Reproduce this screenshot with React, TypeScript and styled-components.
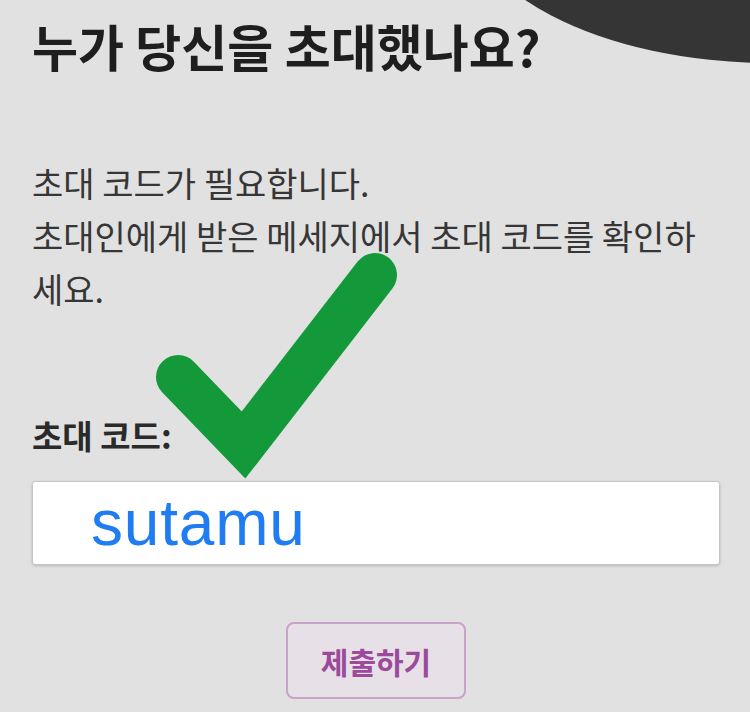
import React from "react";
import styled, { createGlobalStyle } from "styled-components";

const GlobalStyle = createGlobalStyle`
  html, body {
    margin: 0;
    padding: 0;
    background: #e1e1e1;
  }
  * { box-sizing: border-box; }
`;

const Page = styled.div`
  position: relative;
  width: 750px;
  height: 712px;
  overflow: hidden;
  background: #e1e1e1;
  padding: 15px 30px 0 32px;
  display: flex;
  flex-direction: column;
  font-family: "Noto Sans CJK KR", "Noto Sans", sans-serif;
`;

const Blob = styled.div`
  position: absolute;
  left: 460px;
  top: -263px;
  width: 620px;
  height: 326px;
  border-radius: 50%;
  background: #353535;
`;

const Title = styled.h1`
  margin: 0;
  font-size: 50px;
  line-height: 60px;
  font-weight: 700;
  letter-spacing: 0;
  color: #1e1e1e;
`;

const Description = styled.p`
  margin: 81px 0 0;
  font-size: 34px;
  line-height: 53px;
  font-weight: 400;
  letter-spacing: 0;
  color: #363636;
`;

const Label = styled.label`
  margin-top: 100px;
  font-size: 33px;
  line-height: 40px;
  font-weight: 700;
  letter-spacing: 0;
  color: #2a2a2a;
`;

const CodeBox = styled.div`
  margin-top: 26px;
  height: 84px;
  background: #ffffff;
  border: 1px solid #c6c6c6;
  border-radius: 3px;
  box-shadow: 0 1px 3px rgba(0, 0, 0, 0.18);
  display: flex;
  align-items: center;
  padding-left: 58px;
`;

const CodeText = styled.span`
  font-family: "Liberation Sans", Arial, sans-serif;
  font-size: 64px;
  line-height: 1;
  letter-spacing: 0.8px;
  color: #1f7cf2;
  transform: translateY(0px);
`;

const ButtonRow = styled.div`
  display: flex;
  justify-content: center;
  margin-top: 57px;
`;

const SubmitButton = styled.button`
  width: 180px;
  height: 77px;
  border: 2px solid #c9a2c9;
  border-radius: 8px;
  background: #e7e1e7;
  color: #9c4a9c;
  font-family: "Noto Sans CJK KR", "Noto Sans", sans-serif;
  font-size: 30px;
  font-weight: 700;
  letter-spacing: 0;
  cursor: pointer;
`;

const CheckOverlay = styled.svg`
  position: absolute;
  left: 0;
  top: 0;
  pointer-events: none;
`;

export default function App() {
  return (
    <>
      <GlobalStyle />
      <Page>
        <Blob />
        <Title>누가 당신을 초대했나요?</Title>
        <Description>
          초대 코드가 필요합니다.
          <br />
          초대인에게 받은 메세지에서 초대 코드를 확인하
          <br />
          세요.
        </Description>
        <Label>초대 코드:</Label>
        <CodeBox>
          <CodeText>sutamu</CodeText>
        </CodeBox>
        <ButtonRow>
          <SubmitButton type="button">제출하기</SubmitButton>
        </ButtonRow>
        <CheckOverlay width="750" height="712" viewBox="0 0 750 712">
          <polyline
            points="178,377 243.5,445 375,275"
            fill="none"
            stroke="#14993a"
            strokeWidth="44"
            strokeLinecap="round"
            strokeLinejoin="miter"
            strokeMiterlimit="4"
          />
        </CheckOverlay>
      </Page>
    </>
  );
}
